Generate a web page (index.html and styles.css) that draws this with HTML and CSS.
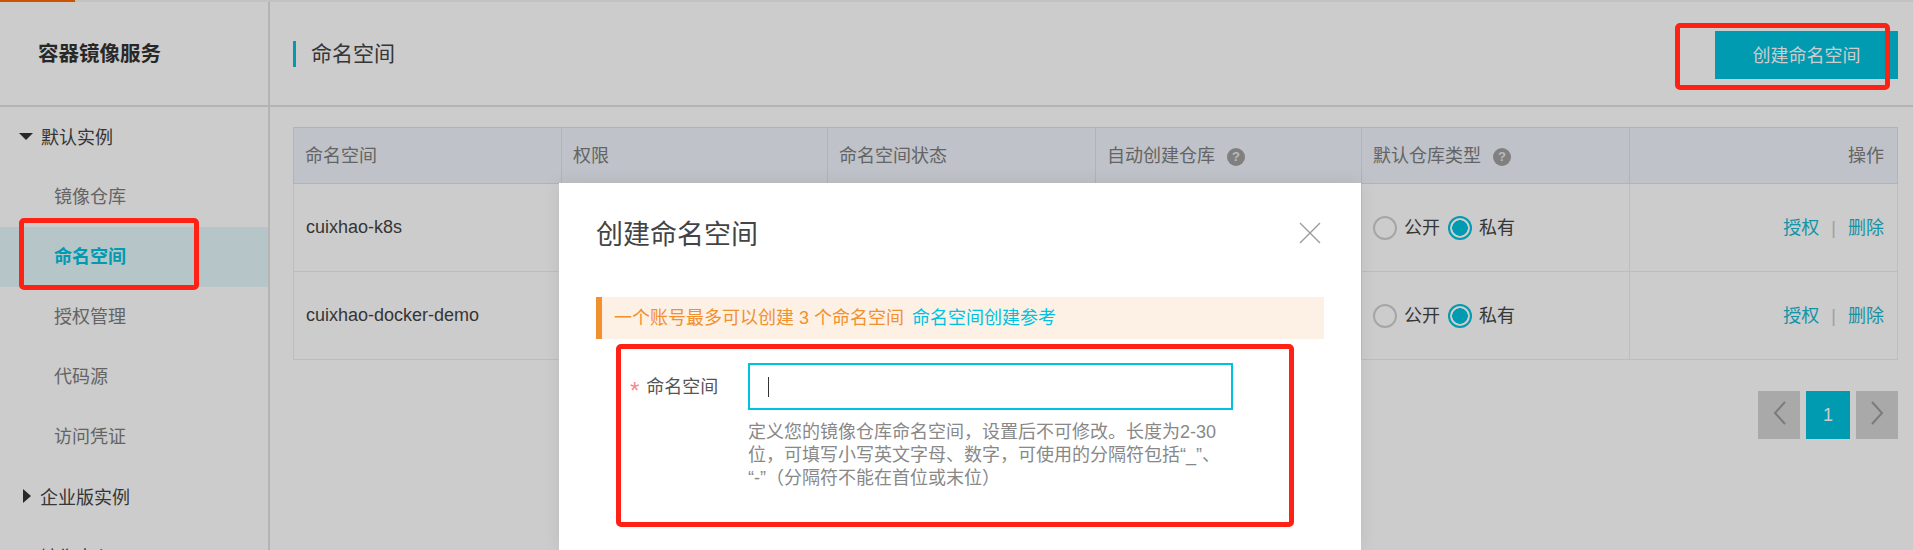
FILE: index.html
```html
<!DOCTYPE html>
<html>
<head>
  <title>命名空间</title>
  <link rel="stylesheet" href="styles.css">
</head>
<body>
  <div class="top-strip"><div class="top-progress"></div></div>
  <div class="app">
    <div class="sidebar">
      <div class="side-title">容器镜像服务</div>
      <div class="side-group"><span class="arrow-down"></span>默认实例</div>
      <div class="side-item">镜像仓库</div>
      <div class="side-item active">命名空间</div>
      <div class="side-item">授权管理</div>
      <div class="side-item">代码源</div>
      <div class="side-item">访问凭证</div>
      <div class="side-group"><span class="arrow-right"></span>企业版实例</div>
      <div class="side-group plain">镜像中心</div>
    </div>
    <div class="main">
      <div class="page-head">
        <div class="page-title">命名空间</div>
        <button class="btn-create">创建命名空间</button>
      </div>
      <div class="content">
        <table class="ns-table">
          <thead>
            <tr>
              <th>命名空间</th>
              <th>权限</th>
              <th>命名空间状态</th>
              <th>自动创建仓库<span class="help">?</span></th>
              <th>默认仓库类型<span class="help">?</span></th>
              <th class="right">操作</th>
            </tr>
          </thead>
          <tbody>
            <tr>
              <td>cuixhao-k8s</td>
              <td></td>
              <td></td>
              <td></td>
              <td>
                <div class="radios">
                  <span class="radio"></span><span class="radio-label">公开</span>
                  <span class="radio checked"></span><span class="radio-label">私有</span>
                </div>
              </td>
              <td class="right actions"><a class="link">授权</a><span class="sep">|</span><a class="link">删除</a></td>
            </tr>
            <tr>
              <td>cuixhao-docker-demo</td>
              <td></td>
              <td></td>
              <td></td>
              <td>
                <div class="radios">
                  <span class="radio"></span><span class="radio-label">公开</span>
                  <span class="radio checked"></span><span class="radio-label">私有</span>
                </div>
              </td>
              <td class="right actions"><a class="link">授权</a><span class="sep">|</span><a class="link">删除</a></td>
            </tr>
          </tbody>
        </table>
        <div class="pager">
          <div class="page-btn">
            <svg class="chevron" width="13" height="24" viewBox="0 0 13 24"><path d="M12 1 L2 12 L12 23" fill="none" stroke="#9a9a9a" stroke-width="2"/></svg>
          </div>
          <div class="page-btn current">1</div>
          <div class="page-btn">
            <svg class="chevron" width="13" height="24" viewBox="0 0 13 24"><path d="M1 1 L11 12 L1 23" fill="none" stroke="#9a9a9a" stroke-width="2"/></svg>
          </div>
        </div>
      </div>
    </div>
  </div>

  <div class="mask"></div>

  <div class="modal">
    <div class="modal-head">
      <div class="modal-title">创建命名空间</div>
      <svg class="modal-close" width="22" height="22" viewBox="0 0 22 22"><path d="M1 1 L21 21 M21 1 L1 21" fill="none" stroke="#999" stroke-width="1.3"/></svg>
    </div>
    <div class="notice">一个账号最多可以创建 3 个命名空间<a class="notice-link">命名空间创建参考</a></div>
    <div class="form-row">
      <label class="form-label"><span class="required">*</span>命名空间</label>
      <div class="form-field">
        <div class="text-input"><span class="caret"></span></div>
        <div class="form-help">定义您的镜像仓库命名空间，设置后不可修改。长度为2-30<br>位，可填写小写英文字母、数字，可使用的分隔符包括“_”、<br>“-”（分隔符不能在首位或末位）</div>
      </div>
    </div>
  </div>

  <div class="mark mark-button"></div>
  <div class="mark mark-menu"></div>
  <div class="mark mark-form"></div>
</body>
</html>
```

FILE: styles.css
```css
html, body {
  height: 100%;
  overflow: hidden;
}
body {
  margin: 0;
  font-family: "Liberation Sans", "Noto Sans CJK SC", Arial, sans-serif;
  font-size: 18px;
  color: #444;
  background-color: #fff;
}
.top-strip {
  height: 2px;
  background-color: #f3f3f3;
}
.top-progress {
  width: 75px;
  height: 2px;
  background-color: #ff6a00;
}
.app {
  display: flex;
  height: 548px;
}

/* sidebar */
.sidebar {
  width: 268px;
  flex-shrink: 0;
  border-right: 2px solid #e2e2e2;
  overflow: hidden;
}
.side-title {
  height: 103px;
  line-height: 104px;
  padding-left: 38px;
  font-size: 20.5px;
  font-weight: bold;
  color: #333;
  border-bottom: 2px solid #e2e2e2;
}
.side-group {
  display: flex;
  align-items: center;
  box-sizing: border-box;
  height: 60px;
  padding-left: 19px;
  padding-bottom: 2px;
  color: #444;
}
.side-group.plain {
  padding-left: 40px;
}
.arrow-down {
  width: 0;
  height: 0;
  margin-right: 8px;
  border-left: 7px solid transparent;
  border-right: 7px solid transparent;
  border-top: 7px solid #333;
}
.arrow-right {
  width: 0;
  height: 0;
  margin-left: 4px;
  margin-right: 9px;
  border-top: 7px solid transparent;
  border-bottom: 7px solid transparent;
  border-left: 8px solid #333;
}
.side-item {
  height: 60px;
  line-height: 60px;
  padding-left: 54px;
  color: #7d7d7d;
}
.side-item.active {
  background-color: #e3f7fb;
  color: #00c1de;
  font-weight: bold;
}

/* main */
.main {
  flex: 1;
  min-width: 0;
}
.page-head {
  display: flex;
  justify-content: space-between;
  align-items: center;
  box-sizing: border-box;
  height: 105px;
  padding: 0 15px 0 23px;
  border-bottom: 2px solid #e2e2e2;
}
.page-title {
  height: 26px;
  line-height: 26px;
  padding-left: 15px;
  font-size: 21px;
  color: #444;
  border-left: 3px solid #00c1de;
}
.btn-create {
  width: 183px;
  height: 48px;
  margin-top: 3px;
  padding: 0 0 3px;
  border: none;
  background-color: #00c1de;
  color: #fff;
  font-family: inherit;
  font-size: 18px;
}
.content {
  padding: 20px 15px 0 23px;
}

/* table */
.ns-table {
  width: 100%;
  table-layout: fixed;
  border-collapse: collapse;
}
.ns-table th {
  box-sizing: border-box;
  height: 56px;
  padding: 0 13px 4px 11px;
  text-align: left;
  font-weight: normal;
  color: #7d7d7d;
  background-color: #eff3fb;
  border: 1px solid #d5e2f3;
}
.ns-table th:nth-child(odd) {
  width: 268px;
}
.ns-table th:nth-child(even) {
  width: 266px;
}
.ns-table th:last-child {
  width: auto;
}
.ns-table td {
  box-sizing: border-box;
  height: 88px;
  padding: 0 13px 0 12px;
  border: 1px solid #ededed;
  color: #444;
}
.ns-table .right {
  text-align: right;
}
.ns-table .actions {
  padding-bottom: 4px;
}
.help {
  display: inline-block;
  width: 18px;
  height: 18px;
  margin-left: 12px;
  line-height: 18px;
  border-radius: 50%;
  background-color: #a0a0a0;
  color: #e8e8e8;
  font-size: 13px;
  font-weight: bold;
  text-align: center;
  vertical-align: 1px;
}
.radios {
  display: flex;
  align-items: center;
  margin-left: -1px;
}
.radio {
  box-sizing: border-box;
  width: 24px;
  height: 24px;
  border: 2px solid #d0d0d0;
  border-radius: 50%;
}
.radio.checked {
  border-color: #00c1de;
  background: radial-gradient(circle, #00c1de 0, #00c1de 7.5px, #fff 8px);
}
.radio-label {
  margin-left: 7px;
  margin-right: 8px;
  padding-bottom: 3px;
}
.link {
  color: #1ab8d1;
}
.sep {
  margin: 0 12px;
  color: #c8c8c8;
}

/* pager */
.pager {
  display: flex;
  justify-content: flex-end;
  gap: 6px;
  margin-top: 31px;
}
.page-btn {
  display: flex;
  align-items: center;
  justify-content: center;
  width: 42px;
  height: 48px;
  background-color: #d4d4d4;
}
.page-btn.current {
  width: 44px;
  background-color: #00c1de;
  color: #fff;
}
.chevron {
  margin-bottom: 4px;
}

/* dialog */
.mask {
  position: absolute;
  top: 0;
  left: 0;
  right: 0;
  bottom: 0;
  background-color: rgba(0, 0, 0, 0.2);
}
.modal {
  position: absolute;
  top: 183px;
  left: 559px;
  box-sizing: border-box;
  width: 802px;
  height: 367px;
  padding: 0 37px 0 37px;
  background-color: #fff;
  box-shadow: 0 0 16px rgba(0, 0, 0, 0.08);
}
.modal-head {
  display: flex;
  justify-content: space-between;
  align-items: center;
  height: 100px;
  margin-bottom: 14px;
}
.modal-title {
  padding-bottom: 2px;
  font-size: 27px;
  color: #444;
}
.modal-close {
  margin-right: 3px;
}
.notice {
  height: 42px;
  line-height: 42px;
  padding-left: 12px;
  border-left: 6px solid #f1902f;
  background-color: #fdf1e6;
  color: #f1902f;
}
.notice-link {
  margin-left: 8px;
  color: #00c1de;
}
.form-row {
  display: flex;
  margin-top: 24px;
}
.form-label {
  width: 152px;
  flex-shrink: 0;
  box-sizing: border-box;
  padding: 1px 0 0 34px;
  line-height: 47px;
  color: #555;
}
.required {
  margin-right: 7px;
  color: #f58a8a;
  font-size: 24px;
  line-height: 1;
  vertical-align: -6px;
}
.form-field {
  width: 485px;
}
.text-input {
  display: flex;
  align-items: center;
  box-sizing: border-box;
  height: 47px;
  padding-left: 18px;
  border: 2px solid #00c1de;
}
.caret {
  width: 1px;
  height: 20px;
  background-color: #333;
}
.form-help {
  margin-top: 11px;
  line-height: 23px;
  color: #888;
  text-spacing-trim: space-all;
}

/* red annotation boxes drawn on top of the screenshot */
.mark {
  position: absolute;
  box-sizing: border-box;
  border: 5px solid #ff2114;
  border-radius: 5px;
}
.mark-button {
  top: 23px;
  left: 1675px;
  width: 215px;
  height: 67px;
}
.mark-menu {
  top: 218px;
  left: 19px;
  width: 180px;
  height: 72px;
}
.mark-form {
  top: 344px;
  left: 616px;
  width: 678px;
  height: 183px;
}
```
